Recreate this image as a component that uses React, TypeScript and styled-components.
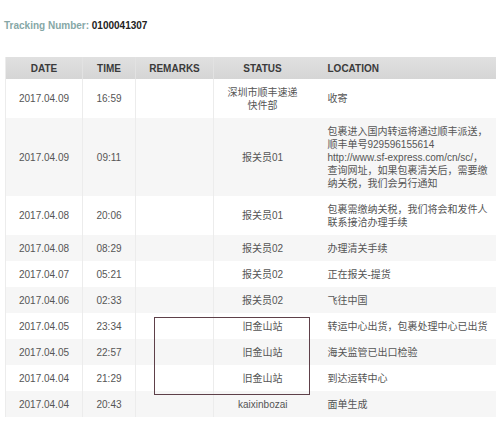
import React from "react";
import styled, { createGlobalStyle } from "styled-components";

const Global = createGlobalStyle`
  html, body { margin: 0; padding: 0; background: #ffffff; }
  body { width: 496px; height: 432px; overflow: hidden; font-family: "Liberation Sans", Arial, "Noto Sans CJK SC", sans-serif; }
`;

const Page = styled.div`
  padding: 20px 0 0 4px;
`;

const Tracking = styled.div`
  font-size: 10px;
  font-weight: bold;
  line-height: 12px;
  color: #222;
  margin-bottom: 25px;
`;

const TrackLabel = styled.span`
  color: #86a7a6;
`;

const TableWrap = styled.div`
  position: relative;
  margin-left: 1px;
`;

const Table = styled.table`
  border-collapse: collapse;
  table-layout: fixed;
  width: 500px;
  font-size: 10px;
  color: #555;
  border-left: 1px solid #ececec;
`;

const HeadRow = styled.tr`
  background: linear-gradient(#e0e0e0, #d5d5d5);
`;

const Th = styled.th<{ $align?: string; $sep?: boolean }>`
  height: 22px;
  padding: 0 ${(p) => (p.$align === "left" ? "0 0 16px" : "0")};
  padding-left: ${(p) => (p.$align === "left" ? "16px" : "0")};
  text-align: ${(p) => p.$align || "center"};
  font-weight: bold;
  font-size: 10px;
  color: #3a3a3a;
  border-right: ${(p) => (p.$sep ? "1px solid #e2e2e2" : "none")};
`;

const Row = styled.tr<{ $shade: boolean }>`
  background: ${(p) => (p.$shade ? "#f6f6f6" : "#ffffff")};
`;

const Td = styled.td<{ $align?: string; $sep?: boolean }>`
  padding: 6.5px 0;
  padding-left: ${(p) => (p.$align === "left" ? "16px" : "0")};
  line-height: 13px;
  text-align: ${(p) => p.$align || "center"};
  vertical-align: middle;
  white-space: nowrap;
  border-right: ${(p) => (p.$sep ? "1px solid #ececec" : "none")};
`;

const Line = styled.div``;

const Highlight = styled.div`
  position: absolute;
  left: 149px;
  top: 260px;
  width: 154px;
  height: 76px;
  border: 1px solid #5e4049;
  pointer-events: none;
`;

type Entry = { date: string; time: string; status: string[]; location: string[] };

const rows: Entry[] = [
  { date: "2017.04.09", time: "16:59", status: ["深圳市顺丰速递", "快件部"], location: ["收寄"] },
  {
    date: "2017.04.09",
    time: "09:11",
    status: ["报关员01"],
    location: [
      "包裹进入国内转运将通过顺丰派送，",
      "顺丰单号929596155614",
      "http://www.sf-express.com/cn/sc/，",
      "查询网址，如果包裹清关后，需要缴",
      "纳关税，我们会另行通知",
    ],
  },
  {
    date: "2017.04.08",
    time: "20:06",
    status: ["报关员01"],
    location: ["包裹需缴纳关税，我们将会和发件人", "联系接洽办理手续"],
  },
  { date: "2017.04.08", time: "08:29", status: ["报关员02"], location: ["办理清关手续"] },
  { date: "2017.04.07", time: "05:21", status: ["报关员02"], location: ["正在报关-提货"] },
  { date: "2017.04.06", time: "02:33", status: ["报关员02"], location: ["飞往中国"] },
  { date: "2017.04.05", time: "23:34", status: ["旧金山站"], location: ["转运中心出货，包裹处理中心已出货"] },
  { date: "2017.04.05", time: "22:57", status: ["旧金山站"], location: ["海关监管已出口检验"] },
  { date: "2017.04.04", time: "21:29", status: ["旧金山站"], location: ["到达运转中心"] },
  { date: "2017.04.04", time: "20:43", status: ["kaixinbozai"], location: ["面单生成"] },
];

export default function App() {
  return (
    <>
      <Global />
      <Page>
        <Tracking>
          <TrackLabel>Tracking Number: </TrackLabel>0100041307
        </Tracking>
        <TableWrap>
          <Table>
            <colgroup>
              <col style={{ width: 77 }} />
              <col style={{ width: 53 }} />
              <col style={{ width: 78 }} />
              <col style={{ width: 98 }} />
              <col style={{ width: 194 }} />
            </colgroup>
            <thead>
              <HeadRow>
                <Th $sep>DATE</Th>
                <Th $sep>TIME</Th>
                <Th $sep>REMARKS</Th>
                <Th>STATUS</Th>
                <Th $align="left">LOCATION</Th>
              </HeadRow>
            </thead>
            <tbody>
              {rows.map((r, i) => (
                <Row key={i} $shade={i % 2 === 1}>
                  <Td $sep>{r.date}</Td>
                  <Td $sep>{r.time}</Td>
                  <Td $sep></Td>
                  <Td>
                    {r.status.map((s, j) => (
                      <Line key={j}>{s}</Line>
                    ))}
                  </Td>
                  <Td $align="left">
                    {r.location.map((s, j) => (
                      <Line key={j}>{s}</Line>
                    ))}
                  </Td>
                </Row>
              ))}
            </tbody>
          </Table>
          <Highlight />
        </TableWrap>
      </Page>
    </>
  );
}
